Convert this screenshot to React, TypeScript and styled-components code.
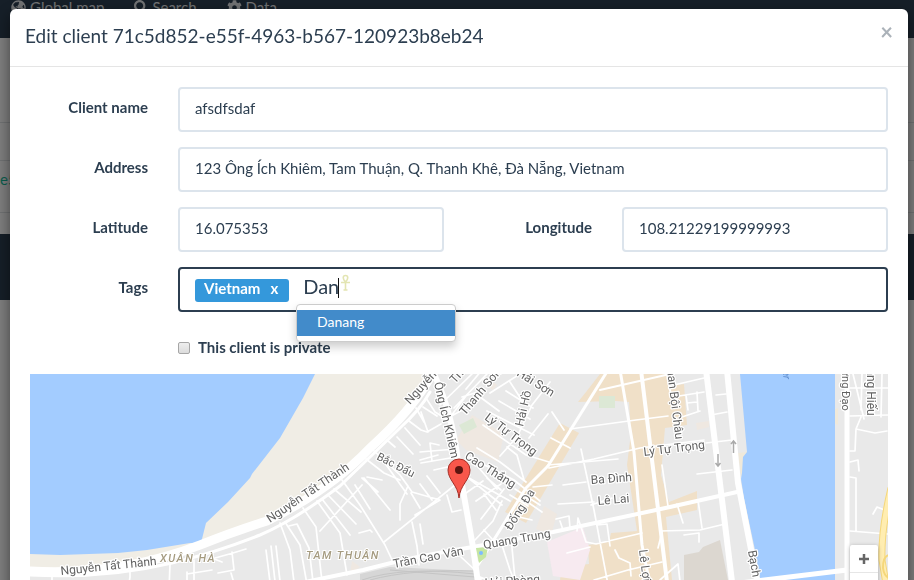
import React, { useState } from 'react';
import styled, { createGlobalStyle } from 'styled-components';
import { FaGlobeAmericas, FaSearch, FaCog } from 'react-icons/fa';

const ink = '#2c3e50';
const line = '#dce4ec';

const GlobalStyle = createGlobalStyle`
  * { box-sizing: border-box; }
  html, body { margin: 0; height: 100%; overflow: hidden; }
  body {
    background: #fff;
    color: ${ink};
    font: 15px/21px Lato, "Liberation Sans", sans-serif;
  }
`;

const NavBar = styled.nav`
  display: flex;
  gap: 30px;
  height: 38px;
  padding: 0 11px;
  background: ${ink};
`;

const NavLink = styled.a`
  display: flex;
  gap: 4px;
  height: 14px;
  align-items: center;
  color: #e4e6e8;
  text-decoration: none;
`;

const Rows = styled.table`
  width: 100%;
  margin-top: 84px;
  border-collapse: collapse;
`;

const RowCell = styled.td`
  height: ${(p: { $tall?: boolean }) => (p.$tall ? 52 : 38)}px;
  padding: 8px 0;
  border: solid #e0e4e6;
  border-width: 1px 0;
  vertical-align: top;
`;

const RowLink = styled.a`
  color: #18bc9c;
  text-decoration: none;
`;

const Footer = styled.footer`
  height: 66px;
  margin-top: 21px;
  background: ${ink};
`;

const Backdrop = styled.div`
  position: fixed;
  inset: 0;
  padding: 9px 6px 0 10px;
  overflow: hidden;
  background: rgba(0, 0, 0, 0.5);
`;

const Dialog = styled.section`
  background: #fff;
  border-radius: 6px;
  box-shadow: 0 5px 15px rgba(0, 0, 0, 0.5);
`;

const DialogHeader = styled.header`
  display: flex;
  justify-content: space-between;
  height: 58px;
  padding: 13px 15px;
  border-bottom: 1px solid #e5e5e5;
`;

const Title = styled.h4`
  margin: 0;
  font-size: 19px;
  font-weight: 400;
  line-height: 27px;
`;

const Close = styled.button`
  height: 20px;
  padding: 0;
  border: 0;
  background: none;
  color: #abb2b9;
  font: 700 22px/20px Lato, sans-serif;
`;

const Body = styled.form`
  padding: 20px;
`;

const FieldRow = styled.div`
  display: grid;
  grid-template-columns: ${(p: { $split?: boolean }) => (p.$split ? '2fr 4fr 2fr 4fr' : '2fr 10fr')};
  margin: 0 -15px 15px;
`;

const Label = styled.label`
  padding: 10px 15px 0;
  font-weight: 700;
  text-align: right;
`;

const Cell = styled.div`
  min-width: 0;
  padding: 0 15px;
`;

const TextInput = styled.input`
  display: block;
  width: 100%;
  height: 45px;
  padding: 8px 15px 12px;
  border: 2px solid ${line};
  border-radius: 4px;
  background: #fff;
  color: ${ink};
  font: inherit;
  outline: 0;
`;

const TagBox = styled.div`
  position: relative;
  display: flex;
  height: 45px;
  padding: 0 15px;
  border: 2px solid ${ink};
  border-radius: 4px;
`;

const Tag = styled.span`
  display: flex;
  gap: 10px;
  align-items: flex-start;
  height: 23px;
  margin: 10px 14px 0 0;
  padding: 0 11px 0 9px;
  border-radius: 3px;
  background: #3498db;
  color: #fff;
  font-weight: 700;
  line-height: 19px;
`;

const TagRemove = styled.button`
  height: 19px;
  padding: 0;
  border: 0;
  background: none;
  color: inherit;
  font: inherit;
`;

const TagInput = styled.input`
  width: 35px;
  height: 28px;
  margin-top: 3px;
  padding: 0;
  border: 0;
  outline: 0;
  color: ${ink};
  font: 20px/28px Lato, sans-serif;
`;

const Caret = styled.i`
  width: 1px;
  height: 20px;
  margin-top: 9px;
  background: #111;
`;

const Ankh = styled.svg`
  width: 11px;
  height: 17px;
  margin: 5px 0 0 1px;
`;

const Menu = styled.ul`
  position: absolute;
  z-index: 2;
  top: 35px;
  left: 116px;
  width: 160px;
  margin: 0;
  padding: 5px 0;
  border: 1px solid #ccc;
  border-radius: 4px;
  background: #fff;
  box-shadow: 0 5px 10px rgba(0, 0, 0, 0.2);
  list-style: none;
`;

const MenuItem = styled.li`
  padding: 0 20px 2px;
  background: #428bca;
  color: #fff;
  font-size: 14px;
  line-height: 24px;
`;

const CheckLabel = styled.label`
  display: flex;
  gap: 8px;
  align-items: center;
  width: max-content;
  height: 21px;
  margin: 10px 0 1px;
  font-weight: 700;
`;

const CheckBox = styled.input`
  appearance: none;
  width: 12px;
  height: 12px;
  margin: 0;
  border: 1px solid #a6a6a6;
  border-radius: 2px;
  background: linear-gradient(#eee, #dcdcdc);
`;

const MapFrame = styled.div`
  position: relative;
  height: 350px;
  overflow: hidden;
  background: #e9e9e9;
`;

const MapSvg = styled.svg`
  display: block;
  width: 100%;
  height: 350px;
  font-family: Roboto, sans-serif;
`;

const Zoom = styled.div`
  position: absolute;
  top: 171px;
  right: 10px;
  width: 28px;
  border-radius: 2px;
  background: #fff;
  box-shadow: 0 1px 4px rgba(0, 0, 0, 0.3);
`;

const ZoomButton = styled.button`
  display: grid;
  place-items: center;
  width: 28px;
  height: 28px;
  padding: 0;
  border: 0;
  border-bottom: 1px solid #e6e6e6;
  background: none;
`;

const smallStreets = [
  // Xuân Hà and Tam Thuận
  'M52 576V590M130 570V577L128 590M170 564L169 590M187 572V590M194 560V590M187 574L212 570M209 557L222 562M208 560L233 553L246 549M232 552L234 570L218 573M231 573L236 590',
  'M266 550L271 590M271 546L276 590M276 546L281 590M280 523L290 550L295 590M285 522L300 545L308 590M289 526L297 524L309 548L314 590M303 508L316 527L321 573L322 580M317 501L340 533L347 575M322 499L350 535M328 495L356 524M334 489L361 512M320 531L362 485M342 480L360 505L385 545L393 562M362 478L378 492M364 478L390 510M367 477L382 480M355 485L370 509M359 533L370 530L372 532',
  'M373 450L400 475L412 492L440 500L415 515M366 459L384 473L400 480M382 459L407 494M384 542L455 485L470 475M402 478L408 486L400 504L400 520M411 493L420 508M420 484L432 500M427 476L440 493M412 522L417 546L419 565M420 524L423 544M387 440L395 447M397 437L413 454M405 428L420 445M409 421L421 430L427 432L441 424M416 408L424 422M421 412L428 432M423 407L437 416',
  'M426 398L435 412L448 420L466 396M420 452L455 449M420 460L438 455M421 463L456 457M432 461L430 443L439 445M434 470L465 463M447 495L452 512L461 510M440 405L472 374M446 419L475 403M454 408L487 374M462 397L481 391M466 389L482 370',
  // Blocks between Ông Ích Khiêm and Đống Đa
  'M490 393L520 374M480 397L499 411M487 411L534 435M499 401L530 419M506 391L533 408M510 382L525 405M483 425L526 455L549 462M550 382L532 405L517 437M548 414L529 438M551 438L570 448M552 412L564 430M467 456L514 480L540 501M477 448L500 462L526 482M507 447L517 455L524 480M500 456L516 438M461 472L502 505M469 478L510 501M473 461L497 489M481 519L504 489M476 501L501 484M466 493L483 481M474 541L493 521L502 501M484 494L496 510M487 478L501 490M510 495L528 506M515 489L540 505M529 503L542 512M519 517L532 520M481 580L475 570L461 557M484 530L493 540M500 539L510 570L518 590M511 537L516 590M475 575L500 585',
  // Centre
  'M533 487L552 485M563 485L586 482M558 504L594 502M591 505L612 498M548 465L618 459M549 468L594 459L640 448L704 440M570 429L636 420L668 416M560 521L563 530M556 519L569 516L570 528M578 518L577 531M578 518L586 542L596 544L642 533M581 449L594 510L609 590M567 553L590 547M615 550L619 558L630 563L631 576M594 580L628 570L662 562M610 546L607 524L597 525',
  // Eastern streets
  'M674 385L704 378M679 396L704 392M682 417L700 411M686 395L688 410M697 392L698 411M687 403L697 402M716 395L726 394M711 415L727 412M706 443L732 440M697 474L732 470M677 504L683 523M698 500L702 528M660 531L700 530L725 524M684 535L699 533L699 542M662 465L668 506M660 580L678 564L681 590M662 532L658 548',
  // Eastern bank
  'M853 374L864 419M862 374L861 410M882 374L881 417M850 388H888M850 416L888 415M861 417L856 429L875 433L887 431M856 429L855 451H850M850 462L858 460L859 471M850 477L856 478L856 531M850 531L888 534M873 514L877 507L887 511',
];

const avenues = [
  { d: 'M548 466L608 370', w: 3 },
  { d: 'M548 466L526 488L500 530L478 565', w: 3 },
  { d: 'M620 370L634 452L642 545L651 590', w: 3 },
  { d: 'M641 370L653 468L668 590', w: 4 },
  { d: 'M600 390L670 374', w: 2 },
  { d: 'M666 370L672 400', w: 2 },
  { d: 'M30 575Q105 579 172 563Q217 552 260 535Q295 520 340 486L400 428Q420 410 430 392', w: 3 },
  { d: 'M30 571Q120 576 200 545Q235 531 267 521Q330 490 370 448Q418 405 436 366', w: 9 },
  { d: 'M305 582L363 570Q420 555 473 547L553 532L670 507L737 492', w: 4 },
  { d: 'M432 370Q452 410 458 462L473 547L479 590', w: 6 },
  { d: 'M706 370L718 467L733 590', w: 6 },
  { d: 'M727 370L738 483L759 590', w: 6 },
  { d: 'M740 583L847 570', w: 5 },
  { d: 'M847 370V590', w: 5 },
];

type MapText = { x: number; y: number; r: number; t: string; s?: number };

const streetNames: MapText[] = [
  { x: 61, y: 575, r: -6, t: 'Nguyễn Tất Thành' },
  { x: 270, y: 523, r: -34, t: 'Nguyễn Tất Thành' },
  { x: 410, y: 405, r: -48, t: 'Nguyễn' },
  { x: 434, y: 383, r: 77, t: 'Ông Ích Khiêm' },
  { x: 376, y: 459, r: 27, t: 'Bắc Đẩu', s: 11 },
  { x: 394, y: 568, r: -11, t: 'Trần Cao Vân' },
  { x: 455, y: 384, r: -48, t: 'Thanh' },
  { x: 465, y: 416, r: -50, t: 'Thanh Sơn' },
  { x: 516, y: 375, r: 32, t: 'Hải Sơn' },
  { x: 523, y: 427, r: -77, t: 'Hải Hồ' },
  { x: 484, y: 419, r: 37, t: 'Lý Tự Trọng' },
  { x: 464, y: 458, r: 32, t: 'Cao Thắng' },
  { x: 511, y: 531, r: -58, t: 'Đống Đa' },
  { x: 484, y: 549, r: -10, t: 'Quang Trung' },
  { x: 591, y: 484, r: -4, t: 'Ba Đình' },
  { x: 598, y: 505, r: -5, t: 'Lê Lai' },
  { x: 644, y: 456, r: -7, t: 'Lý Tự Trọng' },
  { x: 666, y: 362, r: 83, t: 'Phan Bội Châu' },
  { x: 639, y: 550, r: 83, t: 'Lê Lợi' },
  { x: 485, y: 587, r: -4, t: 'Hải Phòng' },
  { x: 748, y: 551, r: 80, t: 'Bạch Đằng' },
  { x: 842, y: 337, r: 90, t: 'Trần Hưng Đạo', s: 11 },
  { x: 867, y: 353, r: 90, t: 'Hoàng Hiếu' },
];

function DistrictMap() {
  return (
    <MapSvg viewBox="30 374 858 350" preserveAspectRatio="xMinYMin slice" role="img" aria-label="Map">
      <path fill="#e9e9e9" d="M30 374H888V724H30Z" />
      <path fill="#f0ede5" d="M30 374H434Q418 405 370 448Q330 490 267 521L200 545Q120 576 30 571Z" />
      <path fill="#a3ccff" d="M30 374H315L303 398L280 438L252 474L250 478L228 502L206 523L201 543L190 543L147 550L118 553L60 555L30 554Z" />
      <g fill="#f0e0c8">
        <path d="M600 374H670V386L684 384L687 425L665 428L661 475L669 502L697 491V510L666 517L672 580H560L562 567L589 564L588 545L609 542L611 533L637 531L627 465L631 433L629 402L616 401L578 402L586 392Z" />
        <path d="M560 423L579 433L526 523L505 512Z" />
      </g>
      <g fill="#efe8e1">
        <path d="M472 415L504 434L498 462L466 450L456 440Z" />
        <path d="M544 506L557 514L551 535L536 529Z" />
        <path d="M352 561L360 567L350 574ZM696 423L709 421L709 427L697 430Z" />
        <path d="M486 377L497 385L493 390L486 386Z" />
      </g>
      <path fill="#f7eaf0" d="M547 542L583 527L590 550L580 580L553 576Z" />
      <path fill="#dcd7d0" d="M684 555L699 552L703 547L720 540L728 580H684Z" />
      <path fill="#dce8d5" d="M459 425L473 418L477 427L464 434ZM599 396H615V408H599Z" />
      <path fill="#d6d6d6" d="M360 574L390 567L475 571V582H360Z" />
      <path fill="none" stroke="#c5c5c5" d="M362 580Q402 566 475 574M370 580Q410 569 475 571M390 570L475 577" />
      <path fill="#f0e9da" d="M738 453L747 452V473L741 476ZM743 498L748 508L750 525L744 520ZM833 410L838 408V425L834 423Z" />
      <path fill="#a3ccff" d="M740 374L747 452L743 457L742 473L741 479L744 498L748 517L755 550L762 590H835V374Z" />
      <g fill="none" stroke="#fff" strokeLinecap="round" strokeLinejoin="round">
        {smallStreets.map((d) => (
          <path key={d} d={d} strokeWidth="1.7" />
        ))}
        {avenues.map(({ d, w }) => (
          <path key={d} d={d} strokeWidth={w} />
        ))}
      </g>
      <path fill="#c6e6a2" d="M476 548L488 547L486 557L479 563Z" />
      <circle cx="481" cy="553" r="2" fill="#7ebcff" />
      <g fill="none" stroke="#f5d77a">
        <path d="M891 488Q881 530 882 560L887 590" strokeWidth="7" />
        <path d="M891 488Q881 530 882 560L887 590" stroke="#ffedb1" strokeWidth="5" />
        <path d="M889 555Q883 556 883 568Q884 576 889 578" strokeWidth="2" />
      </g>
      <g fill="none" stroke="#aaa" strokeWidth="1.5">
        <path d="M718 454V466M715.500 463L718 466L720.500 463M733.500 453V441M731 444L733.500 441L736 444" />
      </g>
      <g fill="#626262" stroke="#fff" strokeWidth="2.500" paintOrder="stroke" strokeLinejoin="round">
        {streetNames.map(({ x, y, r, t, s = 12 }) => (
          <text key={`${t}${x}`} fontSize={s} transform={`translate(${x} ${y}) rotate(${r})`}>
            {t}
          </text>
        ))}
      </g>
      <g fill="#a59b80" stroke="#fff" strokeWidth="2" paintOrder="stroke" fontSize="11" fontStyle="italic" fontWeight="500" letterSpacing="1.500">
        <text x="160" y="562">XUÂN HÀ</text>
        <text x="306" y="559">TAM THUẬN</text>
      </g>
      <text fontSize="10" fontStyle="italic" fill="#5685c7" transform="translate(782 358) rotate(86)">
        River
      </text>
      <path fill="#f8574b" stroke="#a42e26" d="M459 498C458 485 448 480 448 470A11 11 0 0 1 470 470C470 480 460 485 459 498Z" />
      <circle cx="459" cy="470" r="4" fill="#5b1510" />
    </MapSvg>
  );
}

export default function App() {
  const [name, setName] = useState('afsdfsdaf');
  const [address, setAddress] = useState('123 Ông Ích Khiêm, Tam Thuận, Q. Thanh Khê, Đà Nẵng, Vietnam');
  const [latitude, setLatitude] = useState('16.075353');
  const [longitude, setLongitude] = useState('108.21229199999993');
  const [query, setQuery] = useState('Dan');

  return (
    <>
      <GlobalStyle />
      <NavBar>
        <NavLink href="#map"><FaGlobeAmericas size={15} />Global map</NavLink>
        <NavLink href="#search"><FaSearch size={14} />Search</NavLink>
        <NavLink href="#data"><FaCog size={15} />Data</NavLink>
      </NavBar>
      <Rows>
        <tbody>
          <tr><RowCell /></tr>
          <tr><RowCell $tall><RowLink href="#client">e5</RowLink></RowCell></tr>
        </tbody>
      </Rows>
      <Footer />
      <Backdrop>
        <Dialog role="dialog" aria-labelledby="dialog-title">
          <DialogHeader>
            <Title id="dialog-title">Edit client 71c5d852-e55f-4963-b567-120923b8eb24</Title>
            <Close type="button" aria-label="Close">×</Close>
          </DialogHeader>
          <Body>
            <FieldRow>
              <Label htmlFor="name">Client name</Label>
              <Cell><TextInput id="name" value={name} onChange={(e) => setName(e.target.value)} /></Cell>
            </FieldRow>
            <FieldRow>
              <Label htmlFor="address">Address</Label>
              <Cell><TextInput id="address" value={address} onChange={(e) => setAddress(e.target.value)} /></Cell>
            </FieldRow>
            <FieldRow $split>
              <Label htmlFor="latitude">Latitude</Label>
              <Cell><TextInput id="latitude" value={latitude} onChange={(e) => setLatitude(e.target.value)} /></Cell>
              <Label htmlFor="longitude">Longitude</Label>
              <Cell><TextInput id="longitude" value={longitude} onChange={(e) => setLongitude(e.target.value)} /></Cell>
            </FieldRow>
            <FieldRow>
              <Label htmlFor="tags">Tags</Label>
              <Cell>
                <TagBox>
                  <Tag>Vietnam<TagRemove type="button" aria-label="Remove Vietnam">x</TagRemove></Tag>
                  <TagInput id="tags" value={query} onChange={(e) => setQuery(e.target.value)} />
                  <Caret />
                  <Ankh viewBox="0 0 11 17" fill="none" stroke="#e3e5b3" strokeWidth="1.600" aria-hidden="true">
                    <path d="M5.500 8C2.500 5 2.500 1.500 5.500 1.500S8.500 5 5.500 8V16M1 8.500H10M3.500 16H7.500" />
                  </Ankh>
                  <Menu role="listbox">
                    <MenuItem role="option" aria-selected="true">Danang</MenuItem>
                  </Menu>
                </TagBox>
              </Cell>
            </FieldRow>
            <FieldRow>
              <span />
              <Cell>
                <CheckLabel><CheckBox type="checkbox" />This client is private</CheckLabel>
              </Cell>
            </FieldRow>
            <MapFrame>
              <DistrictMap />
              <Zoom>
                <ZoomButton type="button" aria-label="Zoom in">
                  <svg width="12" height="12" viewBox="0 0 12 12" aria-hidden="true">
                    <path d="M6 1V11M1 6H11" stroke="#666" strokeWidth="2.500" />
                  </svg>
                </ZoomButton>
                <ZoomButton type="button" aria-label="Zoom out">
                  <svg width="12" height="12" viewBox="0 0 12 12" aria-hidden="true">
                    <path d="M1 6H11" stroke="#666" strokeWidth="2.500" />
                  </svg>
                </ZoomButton>
              </Zoom>
            </MapFrame>
          </Body>
        </Dialog>
      </Backdrop>
    </>
  );
}
